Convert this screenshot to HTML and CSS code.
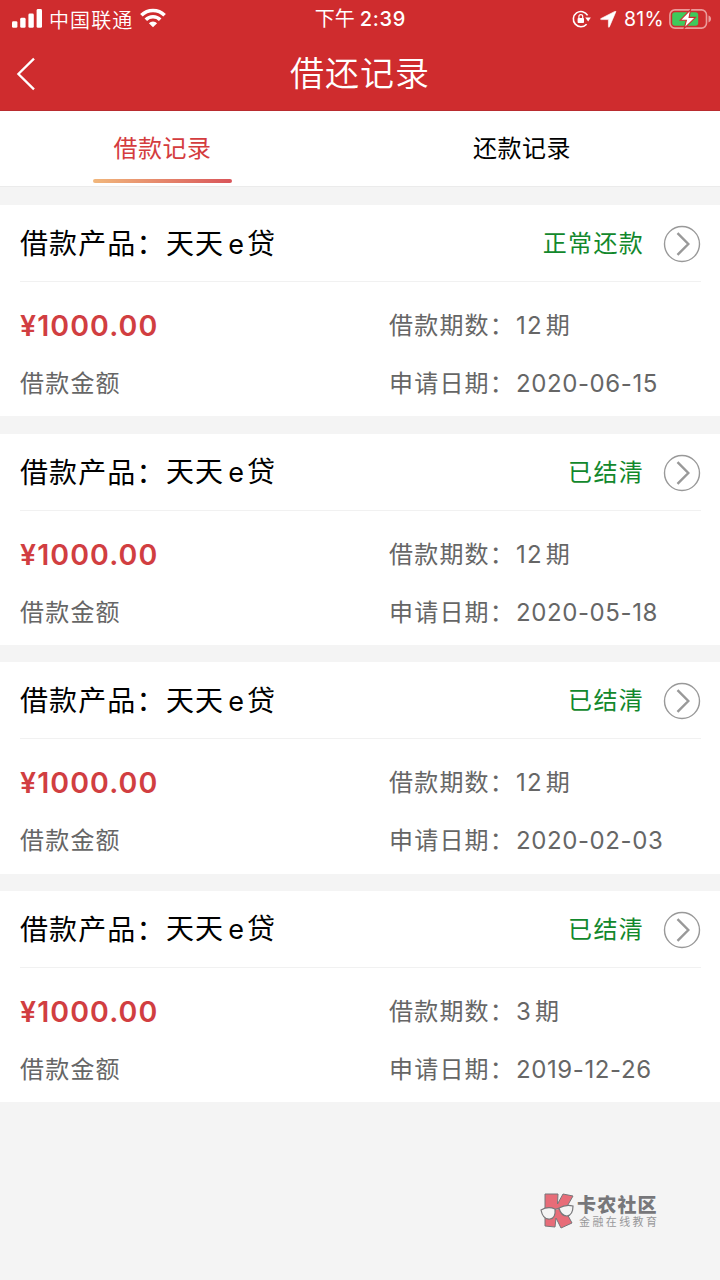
FILE: index.html
```html
<!DOCTYPE html>
<html lang="zh-CN">
<head>
<meta charset="utf-8">
<title>借还记录</title>
<link rel="stylesheet" href="styles.css">
</head>
<body>
<svg class="defs" width="0" height="0">
  <symbol id="go" viewBox="0 0 38 38"><circle cx="19" cy="19" r="17.5" fill="none" stroke="#999" stroke-width="1.4"/><path d="M14.5 8.2 25.3 19 14.5 29.8" fill="none" stroke="#999" stroke-width="2.4"/></symbol>
</svg>
<header class="top">
  <div class="status">
    <div class="status-left">
      <svg class="signal" width="31" height="20" viewBox="0 0 31 20" fill="#fff"><rect x="0" y="12.2" width="5.4" height="6.6" rx="1.4"/><rect x="8.2" y="8.8" width="5.4" height="10" rx="1.4"/><rect x="16.4" y="4.6" width="5.4" height="14.2" rx="1.4"/><rect x="24.6" y="0" width="5.4" height="18.8" rx="1.4"/></svg>
      <span class="carrier">中国联通</span>
      <svg class="wifi" width="26" height="20" viewBox="0 0 26 20"><g fill="none" stroke="#fff" stroke-width="3.6"><path d="M1.4 7.2a16.5 16.5 0 0 1 23.2 0"/><path d="M5.8 11.7a10.2 10.2 0 0 1 14.4 0"/></g><path d="M13 19.2 8.9 15.2a5.8 5.8 0 0 1 8.2 0z" fill="#fff"/></svg>
    </div>
    <div class="clock"><span>下午</span><b>2:39</b></div>
    <div class="status-right">
      <svg width="19" height="18" viewBox="0 0 19 18"><path d="M15.6 5.4A7.6 7.6 0 1 0 14.6 14.2" fill="none" stroke="#fff" stroke-width="1.6"/><path d="M13.2 7.4h5.6L16.2 11.4z" fill="#fff"/><rect x="5.6" y="8" width="6.4" height="5" rx=".8" fill="#fff"/><path d="M6.9 8.3V6.5a1.9 1.9 0 0 1 3.8 0v1.8" fill="none" stroke="#fff" stroke-width="1.2"/></svg>
      <svg class="locate" width="17" height="17" viewBox="0 0 17 17"><path d="M15.8.9 9.4 15.9Q8.6 17 8.4 15.5V8.6H1.3Q-.4 8.3 1 7.5L14.8.4Q16.4-.2 15.8.9z" fill="#fff" stroke="#fff" stroke-width=".6"/></svg>
      <span class="percent">81%</span>
      <svg class="battery" width="43" height="20" viewBox="0 0 43 20"><rect x=".9" y=".9" width="36.6" height="18.2" rx="5" fill="none" stroke="#eb9a9a" stroke-width="1.6"/><path d="M39.5 6.6c3.4 1 3.4 5.8 0 6.8z" fill="#eb9a9a"/><rect x="3.2" y="3.2" width="26" height="13.6" rx="2.8" fill="#3fca5b"/><path d="M21.6.7 11.3 11.2h6.1L15.2 19.3 26.5 8.4h-6.4z" fill="#fff" stroke="#cf2c2e" stroke-width="1.1"/></svg>
    </div>
  </div>
  <div class="nav">
    <svg class="back" width="20" height="34" viewBox="0 0 20 34"><path d="M18 1.6 2.4 17 18 32.4" fill="none" stroke="#fff" stroke-width="2.3"/></svg>
    <h1 class="title">借还记录</h1>
  </div>
</header>
<nav class="tabs">
  <div class="tab active"><span>借款记录</span></div>
  <div class="tab"><span>还款记录</span></div>
</nav>
<main class="list">
  <section class="card">
    <div class="card-head"><span class="product">借款产品：</span><span class="name">天天<i>e</i>贷</span><span class="state">正常还款</span><svg class="go"><use href="#go"/></svg></div>
    <div class="card-body">
      <div class="amount">¥1000.00</div><div class="field"><span class="label">借款期数：</span><span class="count">12</span><span>期</span></div>
      <div class="caption">借款金额</div><div class="field"><span class="label">申请日期：</span><span class="date">2020-06-15</span></div>
    </div>
  </section>
  <section class="card">
    <div class="card-head"><span class="product">借款产品：</span><span class="name">天天<i>e</i>贷</span><span class="state">已结清</span><svg class="go"><use href="#go"/></svg></div>
    <div class="card-body">
      <div class="amount">¥1000.00</div><div class="field"><span class="label">借款期数：</span><span class="count">12</span><span>期</span></div>
      <div class="caption">借款金额</div><div class="field"><span class="label">申请日期：</span><span class="date">2020-05-18</span></div>
    </div>
  </section>
  <section class="card">
    <div class="card-head"><span class="product">借款产品：</span><span class="name">天天<i>e</i>贷</span><span class="state">已结清</span><svg class="go"><use href="#go"/></svg></div>
    <div class="card-body">
      <div class="amount">¥1000.00</div><div class="field"><span class="label">借款期数：</span><span class="count">12</span><span>期</span></div>
      <div class="caption">借款金额</div><div class="field"><span class="label">申请日期：</span><span class="date">2020-02-03</span></div>
    </div>
  </section>
  <section class="card">
    <div class="card-head"><span class="product">借款产品：</span><span class="name">天天<i>e</i>贷</span><span class="state">已结清</span><svg class="go"><use href="#go"/></svg></div>
    <div class="card-body">
      <div class="amount">¥1000.00</div><div class="field"><span class="label">借款期数：</span><span class="count">3</span><span>期</span></div>
      <div class="caption">借款金额</div><div class="field"><span class="label">申请日期：</span><span class="date">2019-12-26</span></div>
    </div>
  </section>
</main>
<footer class="brand">
  <svg width="34" height="36" viewBox="0 0 34 36"><path d="M5 1h13l-.5 10L23 1l10 2-8 14 7 13-11 5-5-10-1 9-10-1z" fill="#e76c78" stroke="#77777a" stroke-width="1"/><path d="M1 17q7-4 14-1 1 9-5 10-7 1-9-9z" fill="#f4f4f4" stroke="#77777a" stroke-width="1.2"/><path d="M19 15q7-4 14-2 0 9-6 10-6 0-8-8zM15 17q2-2 4-1" fill="#f4f4f4" stroke="#77777a" stroke-width="1.2"/></svg>
  <div class="brand-text"><div class="brand-name">卡农社区</div><div class="brand-sub">金融在线教育</div></div>
</footer>
</body>
</html>
```
FILE: styles.css
```css
* { box-sizing: border-box; }
body {
  margin: 0;
  width: 720px;
  height: 1280px;
  overflow: hidden;
  background: #f4f4f4;
  color: #000;
  font-family: Inter, "Noto Sans CJK SC", sans-serif;
  white-space: nowrap;
}
.defs { display: block; }
.top { height: 111px; background: #cf2c2e; color: #fff; border-bottom: 1px solid #b92c2f; }
.status { display: grid; grid-template-columns: 240px 240px 240px; height: 37px; align-items: center; font-size: 20px; line-height: 37px; }
.status-left { display: flex; align-items: center; padding-left: 12px; }
.signal { margin-top: -1px; }
.carrier { margin-left: 6px; letter-spacing: 1.1px; font-family: "Noto Sans CJK SC", sans-serif; font-weight: 350; }
.wifi { margin-left: 7px; margin-top: -2px; }
.clock { display: flex; justify-content: center; gap: 5px; padding: 1px 0 0 1px; }
.clock b { font-weight: 500; letter-spacing: 0.7px; }
.status-right { display: flex; align-items: center; padding-left: 92px; }
.locate { margin-left: 9px; }
.percent { margin-left: 7px; width: 45px; font-size: 19.5px; letter-spacing: 0.2px; }
.nav { display: grid; grid-template-columns: 60px 1fr 60px; height: 74px; align-items: center; }
.back { margin-left: 16px; }
.title { margin: 0; text-align: center; font-size: 34px; font-weight: 350; letter-spacing: 1px; line-height: 74px; }
.tabs { display: grid; grid-template-columns: 322px 397px; height: 76px; background: #fff; border-bottom: 1px solid #ebebeb; font-size: 24px; letter-spacing: 0.5px; line-height: 75px; text-align: center; }
.tab { display: flex; flex-direction: column; align-items: center; padding-left: 3px; }
.tab span { height: 68px; }
.active { color: #d43c3e; }
.active::after { content: ""; width: 139px; height: 4px; border-radius: 2px; background: linear-gradient(90deg, #f1b77c, #d9555a); }
.list { display: grid; gap: 17.2px; padding-top: 18px; }
.card { height: 211.4px; padding: 0 19px 0 20px; background: #fff; }
.card-head { display: flex; align-items: center; height: 77px; padding-top: 2px; border-bottom: 1px solid #f1f1f1; font-size: 28px; letter-spacing: 1.1px; line-height: 74px; }
.product { width: 146px; }
.name i { font-style: normal; font-size: 27px; margin: 0 2px 0 4px; }
.state { margin-left: auto; color: #12882c; font-size: 24px; letter-spacing: 1.3px; }
.go { width: 38px; height: 38px; margin-left: 19px; }
.card-body { display: grid; grid-template-columns: 369px 1fr; grid-auto-rows: 58px; padding-top: 15px; color: #666; font-size: 24px; line-height: 58px; letter-spacing: 1.2px; }
.amount { color: #d13e41; font-size: 28.5px; font-weight: 600; letter-spacing: 1.1px; }
.field { display: flex; }
.label { width: 127px; }
.count { margin-right: 3px; }
.date { letter-spacing: 0.6px; }
.brand { display: flex; align-items: center; gap: 3px; margin: 90px 0 0 540px; color: #77777a; }
.brand-text { padding-top: 4px; }
.brand-name { font-size: 19px; font-weight: 900; letter-spacing: 1.2px; line-height: 19px; }
.brand-sub { font-size: 11px; letter-spacing: 2.4px; line-height: 14px; margin-left: 2px; color: #98989a; }
```
